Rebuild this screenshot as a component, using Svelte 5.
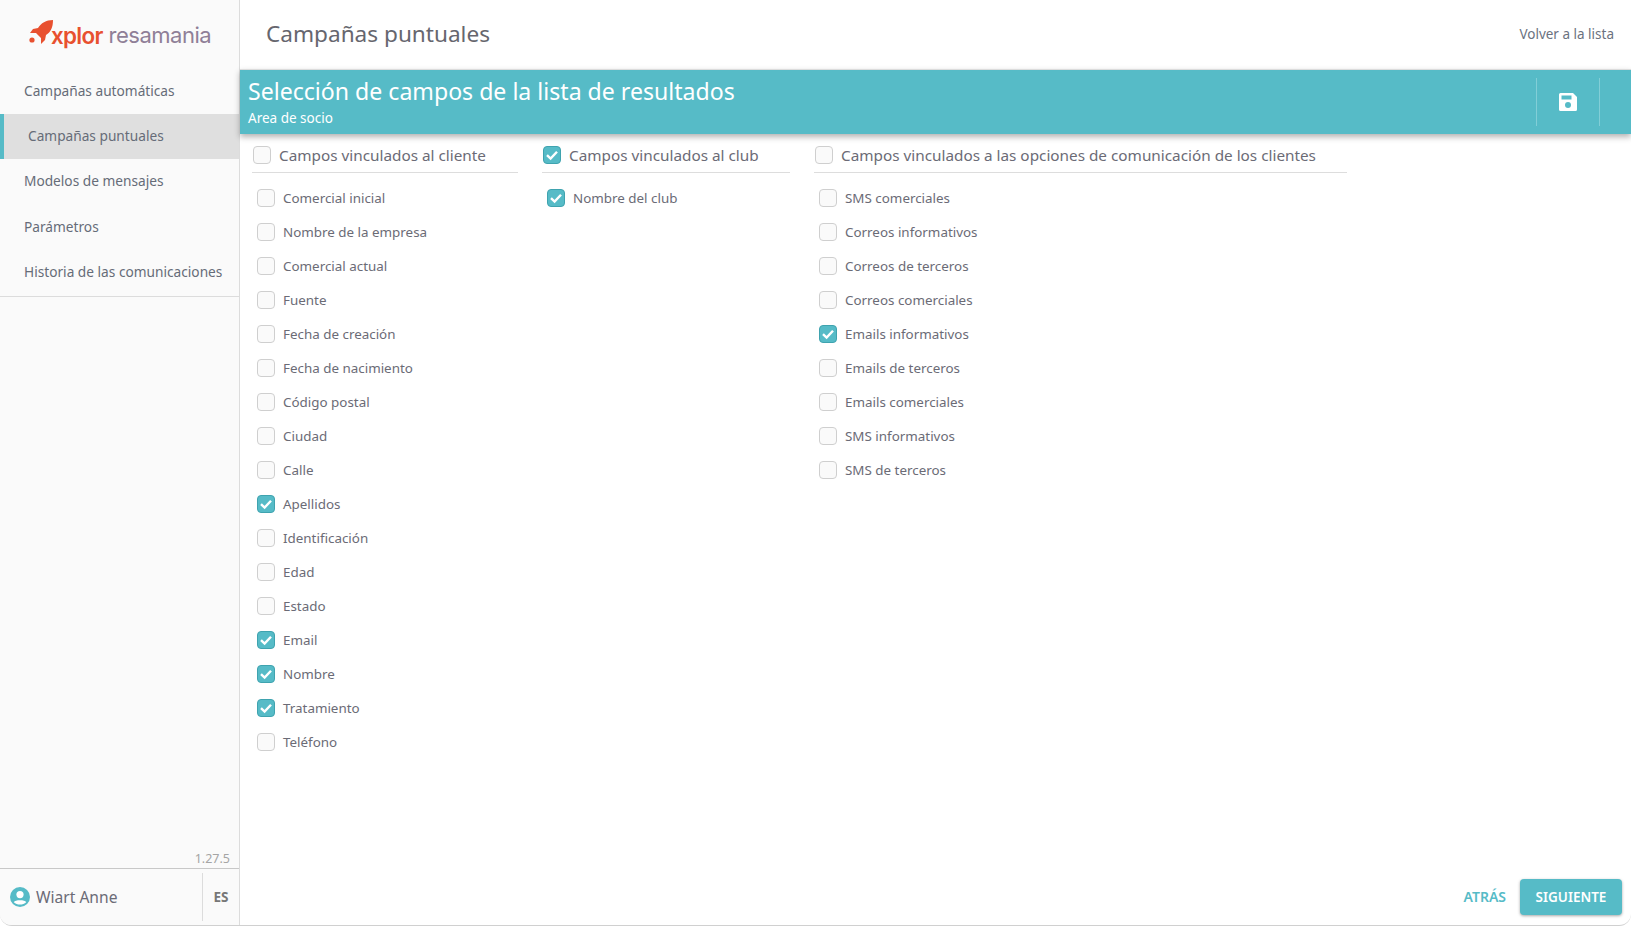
<script lang="ts">
  const groups = [
    {
      title: 'Campos vinculados al cliente', width: 266, checked: false,
      fields: [
        ['Comercial inicial', false], ['Nombre de la empresa', false], ['Comercial actual', false],
        ['Fuente', false], ['Fecha de creación', false], ['Fecha de nacimiento', false],
        ['Código postal', false], ['Ciudad', false], ['Calle', false], ['Apellidos', true],
        ['Identificación', false], ['Edad', false], ['Estado', false], ['Email', true],
        ['Nombre', true], ['Tratamiento', true], ['Teléfono', false]
      ]
    },
    {
      title: 'Campos vinculados al club', width: 248, checked: true,
      fields: [['Nombre del club', true]]
    },
    {
      title: 'Campos vinculados a las opciones de comunicación de los clientes', width: 533, checked: false,
      fields: [
        ['SMS comerciales', false], ['Correos informativos', false], ['Correos de terceros', false],
        ['Correos comerciales', false], ['Emails informativos', true], ['Emails de terceros', false],
        ['Emails comerciales', false], ['SMS informativos', false], ['SMS de terceros', false]
      ]
    }
  ];

  const nav = ['Campañas automáticas', 'Campañas puntuales', 'Modelos de mensajes', 'Parámetros', 'Historia de las comunicaciones'];
</script>

{#snippet box(checked)}
  <span class="box" class:on={checked}>
    {#if checked}
      <svg viewBox="0 0 16 16" width="16" height="16"><path d="M3 8.2 6.6 11.6 13 4.8" fill="none" stroke="#fff" stroke-width="2.4"/></svg>
    {/if}
  </span>
{/snippet}

<div class="page">
  <aside class="sidebar">
    <div class="logo">
      <svg class="rocket" viewBox="0 0 26 26" width="26" height="26">
        <path d="M24 1 C17 1 12 4 9 9 L4 10 L1 14 L7 14 L12 19 L12 25 L16 21 L17 16 C22 13 24 8 24 1 Z" fill="#e8502f"/>
        <circle cx="3" cy="21" r="2.6" fill="#e8502f"/>
      </svg>
      <span class="xplor">xplor</span><span class="resa">resamania</span>
    </div>
    <nav>
      {#each nav as item, i}
        <a class="nav-item" class:active={i === 1} href="#top">{item}</a>
      {/each}
    </nav>
    <div class="version">1.27.5</div>
    <div class="user">
      <svg viewBox="0 0 20 20" width="20" height="20">
        <circle cx="10" cy="10" r="10" fill="#56bbc7"/>
        <circle cx="10" cy="7.6" r="3.6" fill="#fff"/>
        <path d="M3.8 15.2 C5 12.6 15 12.6 16.2 15.2 C13 18.4 7 18.4 3.8 15.2 Z" fill="#fff"/>
      </svg>
      <span class="name">Wiart Anne</span>
      <span class="lang">ES</span>
    </div>
  </aside>

  <main>
    <header class="top">
      <h1>Campañas puntuales</h1>
      <a class="back" href="#top">Volver a la lista</a>
    </header>

    <section class="banner">
      <div class="banner-text">
        <div class="banner-title">Selección de campos de la lista de resultados</div>
        <div class="banner-sub">Area de socio</div>
      </div>
      <div class="banner-action">
        <svg viewBox="0 0 18 18" width="18" height="18">
          <path fill-rule="evenodd" d="M1.5 0 H14 L18 4 V16.5 A1.5 1.5 0 0 1 16.5 18 H1.5 A1.5 1.5 0 0 1 0 16.5 V1.5 A1.5 1.5 0 0 1 1.5 0 Z M2.5 2.5 V6.5 H12.5 V2.5 Z" fill="#fff"/>
          <circle cx="9" cy="12" r="3" fill="#56bbc7"/>
        </svg>
      </div>
    </section>

    <div class="columns">
      {#each groups as g}
        <div class="group" style="width: {g.width}px">
          <label class="group-head">
            {@render box(g.checked)}
            <span>{g.title}</span>
          </label>
          <div class="fields">
            {#each g.fields as f}
              <label class="field">
                {@render box(f[1])}
                <span>{f[0]}</span>
              </label>
            {/each}
          </div>
        </div>
      {/each}
    </div>

    <footer class="actions">
      <button class="link">ATRÁS</button>
      <button class="primary">SIGUIENTE</button>
    </footer>
  </main>
</div>

<style>
  :global(body) {
    margin: 0;
    background: #fff;
    font-family: "Noto Sans", "Open Sans", sans-serif;
    color: #6b6b76;
  }

  .page {
    display: flex;
    height: 925px;
    border-bottom: 1px solid #d0d0d0;
    border-radius: 0 0 12px 12px;
    overflow: hidden;
  }

  .sidebar {
    width: 239px;
    flex: none;
    display: flex;
    flex-direction: column;
    background: #fafafa;
    border-right: 1px solid #dcdcdc;
  }

  .logo {
    height: 68.5px;
    display: flex;
    align-items: center;
    padding: 2px 0 0 29px;
    box-sizing: border-box;
  }

  .rocket {
    margin-right: -4px;
    margin-bottom: 6px;
  }

  .xplor {
    font-family: "Inter", sans-serif;
    font-size: 22.4px;
    font-weight: 600;
    letter-spacing: -0.7px;
    color: #e8502f;
    margin-right: 6px;
  }

  .resa {
    font-family: "Inter", sans-serif;
    font-size: 22px;
    letter-spacing: -0.5px;
    color: #8f7f97;
  }

  nav {
    border-bottom: 1px solid #dcdcdc;
    padding-bottom: 1px;
  }

  .nav-item {
    display: block;
    height: 45.4px;
    line-height: 44px;
    padding-left: 24px;
    font-size: 13.7px;
    color: #666c78;
    text-decoration: none;
    white-space: nowrap;
  }

  .nav-item.active {
    background: #dfdfdf;
    border-left: 4px solid #56bbc7;
    box-sizing: border-box;
  }

  .version {
    margin-top: auto;
    text-align: right;
    padding-right: 9px;
    font-size: 12.5px;
    line-height: 18px;
    color: #a5a5a5;
    border-bottom: 1px solid #c8c8c8;
  }

  .user {
    height: 56px;
    display: flex;
    align-items: center;
    padding-left: 10px;
    font-size: 15.6px;
    box-sizing: border-box;
  }

  .name {
    margin-left: 6px;
    color: #6b6b76;
  }

  .lang {
    margin-left: auto;
    width: 36px;
    height: 48px;
    line-height: 48px;
    text-align: center;
    border-left: 1px solid #dcdcdc;
    font-weight: 700;
    font-size: 13.5px;
    color: #777;
  }

  main {
    flex: 1;
    min-width: 0;
    display: flex;
    flex-direction: column;
  }

  .top {
    height: 69px;
    flex: none;
    display: flex;
    align-items: center;
    justify-content: space-between;
    padding: 0 17px 2px 26px;
    box-sizing: border-box;
  }

  h1 {
    margin: 0;
    font-size: 22.6px;
    font-weight: 400;
    color: #66666e;
  }

  .back {
    font-size: 13.5px;
    color: #6b7280;
    text-decoration: none;
  }

  .banner {
    height: 65px;
    flex: none;
    display: flex;
    align-items: stretch;
    justify-content: space-between;
    background: #56bbc7;
    border-top: 1px solid #dcdcdc;
    box-sizing: border-box;
    box-shadow: 0 3px 6px rgba(0, 0, 0, 0.3);
    color: #fff;
    padding-left: 8px;
    position: relative;
  }

  .banner-title {
    font-size: 23.1px;
    line-height: 28px;
    margin-top: 7px;
    font-weight: 400;
  }

  .banner-sub {
    font-size: 13.5px;
    line-height: 18px;
    margin-top: 4px;
  }

  .banner-action {
    width: 62px;
    margin: 8px 31px 8px 0;
    display: flex;
    align-items: center;
    justify-content: center;
    border-left: 1px solid #82ced7;
    border-right: 1px solid #82ced7;
  }

  .columns {
    flex: 1;
    display: flex;
    align-items: flex-start;
    gap: 24px;
    padding: 3px 0 0 12px;
  }

  .group-head {
    display: flex;
    align-items: center;
    gap: 8px;
    height: 36px;
    padding-left: 1px;
    border-bottom: 1px solid #dddddd;
    font-size: 15.3px;
    white-space: nowrap;
    box-sizing: border-box;
  }

  .fields {
    padding: 8px 0 0 5px;
  }

  .field {
    display: flex;
    align-items: center;
    gap: 8px;
    height: 34px;
    font-size: 13.4px;
    white-space: nowrap;
  }

  .box {
    width: 16px;
    height: 16px;
    flex: none;
    border: 1px solid #cfcfcf;
    border-radius: 4px;
    background: #fafafa;
    display: inline-flex;
    align-items: center;
    justify-content: center;
  }

  .box.on {
    background: #56bbc7;
    border-color: #3fa3af;
  }

  .actions {
    flex: none;
    display: flex;
    justify-content: flex-end;
    align-items: center;
    gap: 14px;
    padding: 0 9px 10px 0;
  }

  button {
    font-family: inherit;
    font-size: 13.5px;
    font-weight: 600;
    border: none;
    cursor: pointer;
  }

  .link {
    background: none;
    color: #56bbc7;
    padding: 0 0 2px;
    font-size: 14px;
  }

  .primary {
    width: 102px;
    height: 36px;
    background: #56bbc7;
    color: #fff;
    border-radius: 4px;
    box-shadow: 0 1px 3px rgba(0, 0, 0, 0.35);
  }
</style>
